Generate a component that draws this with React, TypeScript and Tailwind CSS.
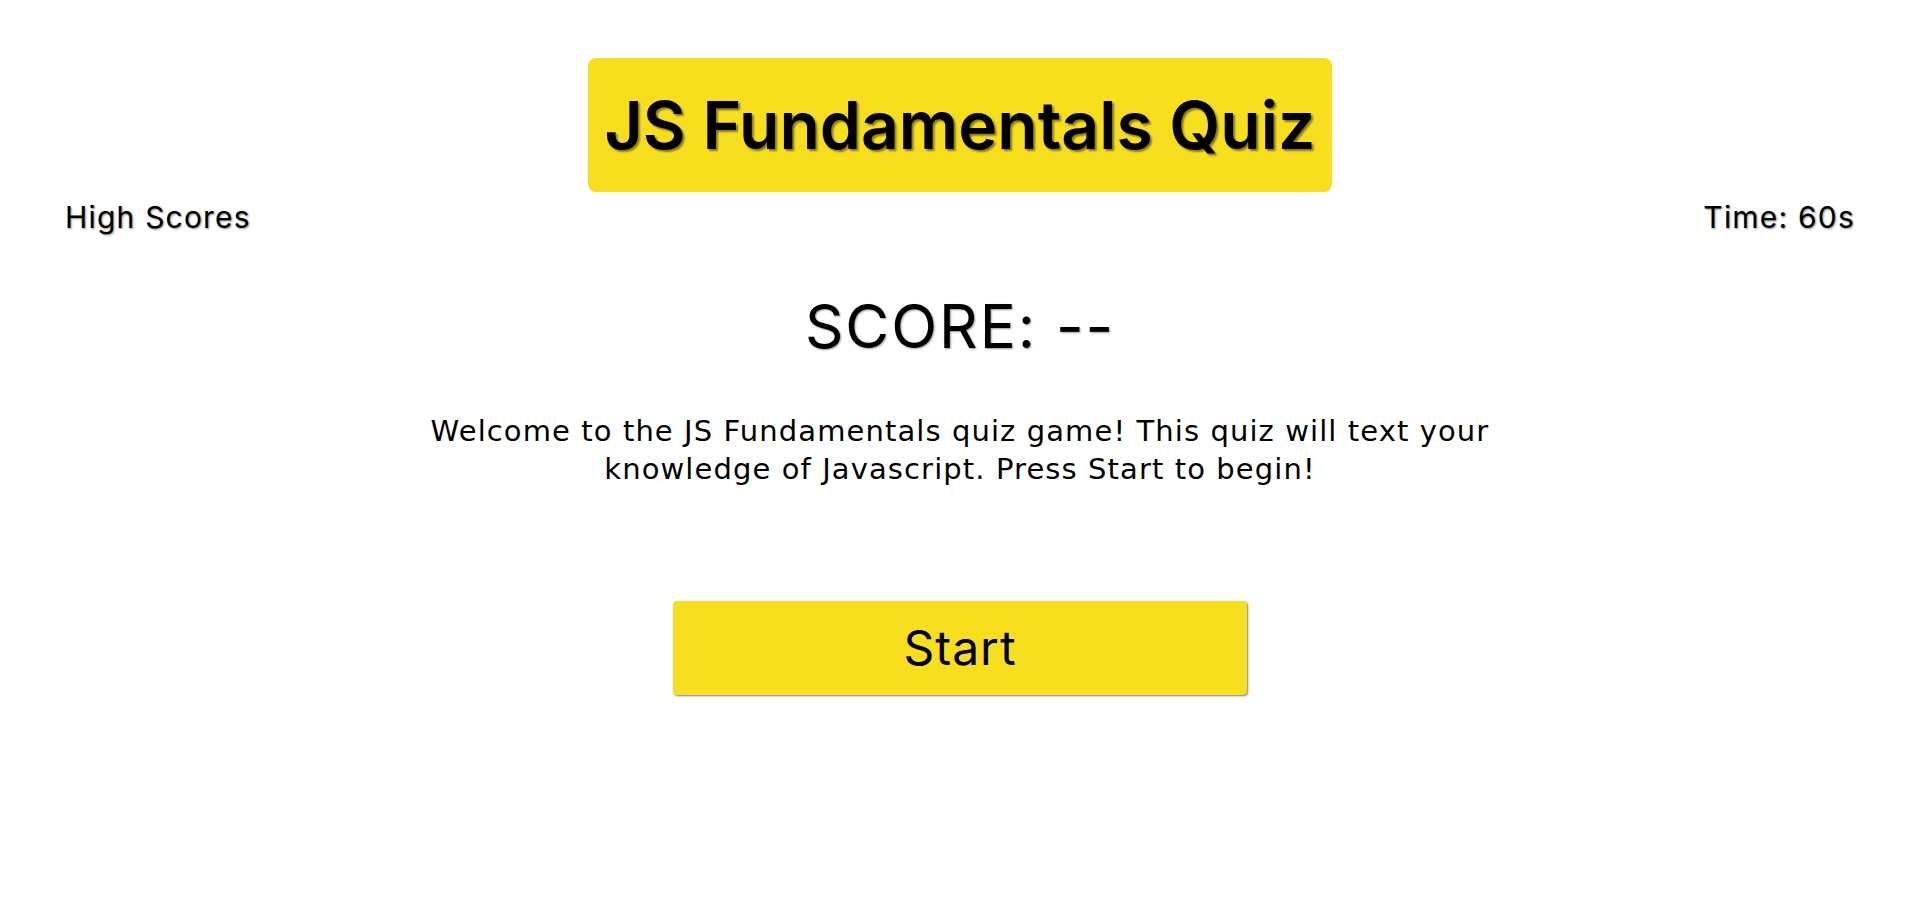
export default function App() {
  return (
    <div className="min-h-[923px] bg-white text-black font-['Inter','Noto_Sans',sans-serif]">
      <header className="flex justify-center pt-[58px]">
        <h1 className="flex h-[134px] w-[744px] items-center justify-center rounded-[8px] bg-[#f7df1e] text-[66px] font-semibold tracking-[0px] [text-shadow:2px_2px_2px_rgba(0,0,0,0.45)]">
          JS Fundamentals Quiz
        </h1>
      </header>
      <div className="flex h-[36px] items-center justify-between px-[65px] mt-[7px] text-[30px] leading-[36px] tracking-[1.2px] [text-shadow:1px_1px_2px_rgba(0,0,0,0.45)]">
        <span>High Scores</span>
        <span>Time: 60s</span>
      </div>
      <main className="flex flex-col items-center">
        <h2 className="mt-[61px] text-[60px] font-normal leading-none tracking-[2px] [text-shadow:1px_1px_2px_rgba(0,0,0,0.4)]">
          SCORE: --
        </h2>
        <p className="mt-[56px] w-[1100px] text-center font-['DejaVu_Sans',sans-serif] text-[29px] leading-[38px] tracking-[1.1px]">
          Welcome to the JS Fundamentals quiz game! This quiz will text your knowledge of Javascript. Press Start to begin!
        </p>
        <button className="mt-[113px] h-[94px] w-[574px] rounded-[4px] bg-[#f7df1e] text-[48px] tracking-[1px] shadow-[1px_1px_2px_rgba(0,0,0,0.5)]">
          Start
        </button>
      </main>
    </div>
  );
}
